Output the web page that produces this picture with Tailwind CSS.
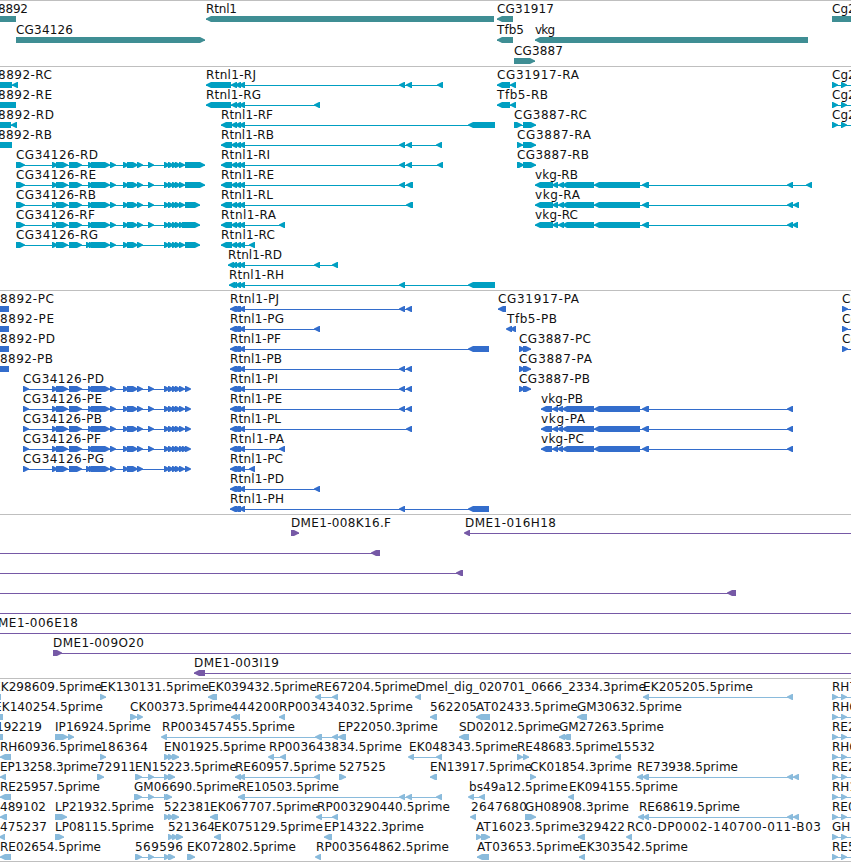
<!DOCTYPE html>
<html lang="en">
<head>
    <meta charset="UTF-8">
    <meta name="viewport" content="width=device-width, initial-scale=1.0">
    <title>Genome browser</title>
    <script src="https://cdn.jsdelivr.net/npm/@tailwindcss/browser@4"></script>
</head>
<body class="bg-white overflow-hidden font-['DejaVu_Sans',sans-serif] text-[12px] text-black">
    <main class="flex flex-col w-[851px] h-[862px] overflow-hidden border-t border-[#bfbfbf]">
        <section id="genes" class="flex flex-col h-[66px] border-b border-[#bfbfbf] text-[#3f8e94]"></section>
        <section id="transcripts" class="flex flex-col h-[224px] border-b border-[#bfbfbf] text-[#009fc2]"></section>
        <section id="proteins" class="flex flex-col h-[224px] border-b border-[#bfbfbf] text-[#336dcc]"></section>
        <section id="clones" class="flex flex-col h-[164px] border-b border-[#bfbfbf] text-[#7659a6]"></section>
        <section id="ests" class="flex flex-col h-[183px] border-b border-[#bfbfbf] text-[#8abbdc]"></section>
    </main>

    <script>
        // Shared exon runs
        const midExons = [52, 56, 56, 68, 69, 82, 88, 91, 91, 110, 110, 116, 123, 127, 127, 138, 137, 143, 148, 154, 164, 168, 168, 172, 172, 176, 175, 180, 179, 184];
        const midExonsG = [52, 56, 56, 68, 69, 82, 86, 89, 89, 92, 91, 110, 110, 116, 123, 127, 127, 138, 137, 143, 164, 168, 168, 172, 172, 176, 175, 180, 179, 184];
        const rtn = [231, 237, 235, 241, 239, 245];
        const rtnP = [230, 237, 233, 241, 239, 245];
        const vkg = [535, 553, 553, 558, 558, 564, 562, 594, 594, 640, 642, 649];
        const vkgP = [541, 552, 552, 558, 557, 563, 562, 594, 594, 640, 642, 649];
        const edge = [832, 838, 841, 847, 900, 905];
        const edgeP = [842, 848, 900, 905];

        // Feature: [label, label start (if the feature starts off screen), label end (0 = natural width), direction, exon start/end pairs]
        const genes = [
            [['8892', -2, 28, '=', [-10, 16]], ['Rtnl1', 206, 237, '<', [206, 494]], ['CG31917', 497, 554, '<', [497, 513]], ['Cg2', 832, 0, '=', [832, 900]]],
            [['CG34126', 16, 73, '>', [16, 205]], ['Tfb5', 497, 524, '<', [497, 513]], ['vkg', 535, 555, '<', [535, 808]]],
            [['CG3887', 514, 563, '>', [514, 535]]]
        ];

        const transcripts = [
            [['8892-RC', -2, 52, '=', [-10, 12]], ['', 0, 0, '<', [12, 18]], ['Rtnl1-RJ', 206, 256, '<', [206, 231, ...rtn, 399, 405, 406, 412, 437, 443]], ['CG31917-RA', 497, 579, '<', [497, 510, 510, 516]], ['Cg2', 832, 0, '>', edge]],
            [['8892-RE', -2, 52, '=', [-10, 16]], ['Rtnl1-RG', 206, 261, '<', [206, 231, ...rtn, 314, 320]], ['Tfb5-RB', 497, 548, '<', [497, 510, 510, 516]], ['Cg2', 832, 0, '>', edge]],
            [['8892-RD', -2, 54, '=', [-10, 11]], ['', 0, 0, '<', [11, 17]], ['Rtnl1-RF', 221, 273, '<', [221, 232, ...rtn, 468, 495]], ['CG3887-RC', 514, 587, '>', [514, 522, 523, 536]], ['Cg2', 832, 0, '>', edge]],
            [['8892-RB', -2, 52, '=', [-10, 12]], ['Rtnl1-RB', 221, 274, '<', [221, 232, ...rtn, 399, 405, 406, 412, 436, 442]], ['CG3887-RA', 517, 591, '>', [517, 522, 523, 536]]],
            [['CG34126-RD', 16, 98, '>', [16, 25, ...midExons, 185, 205]], ['Rtnl1-RI', 221, 270, '<', [221, 232, ...rtn, 399, 405, 406, 412, 437, 443]], ['CG3887-RB', 517, 589, '>', [517, 520, 518, 523, 523, 536]]],
            [['CG34126-RE', 16, 96, '>', [16, 25, ...midExons, 185, 205]], ['Rtnl1-RE', 221, 274, '<', [221, 232, ...rtn, 399, 405, 406, 413]], ['vkg-RB', 535, 578, '<', [...vkg, 787, 793, 806, 812]]],
            [['CG34126-RB', 16, 96, '>', [16, 25, ...midExons, 185, 200]], ['Rtnl1-RL', 221, 273, '<', [221, 232, ...rtn, 406, 413]], ['vkg-RA', 535, 580, '<', [...vkg, 787, 793, 793, 799]]],
            [['CG34126-RF', 16, 95, '>', [16, 25, ...midExons, 182, 200]], ['Rtnl1-RA', 221, 276, '<', [221, 232, ...rtn, 279, 285]], ['vkg-RC', 535, 578, '<', [...vkg, 787, 793, 792, 798]]],
            [['CG34126-RG', 16, 98, '>', [16, 25, ...midExonsG, 185, 200]], ['Rtnl1-RC', 221, 275, '<', [221, 232, ...rtn, 249, 255]]],
            [['Rtnl1-RD', 228, 282, '<', [228, 234, ...rtn, 314, 320, 332, 338]]],
            [['Rtnl1-RH', 229, 284, '<', [229, 235, ...rtn, 399, 405, 468, 495]]]
        ];

        const proteins = [
            [['8892-PC', 0, 54, '=', [-10, 9]], ['Rtnl1-PJ', 230, 279, '<', [...rtnP, 399, 405, 406, 412]], ['CG31917-PA', 498, 579, '<', [498, 506]], ['Cg2', 842, 0, '>', edgeP]],
            [['8892-PE', 0, 54, '=', [-10, 9]], ['Rtnl1-PG', 230, 284, '<', [...rtnP, 314, 320]], ['Tfb5-PB', 507, 557, '<', [507, 512, 510, 516]], ['Cg2', 842, 0, '>', edgeP]],
            [['8892-PD', 0, 55, '=', [-10, 9]], ['Rtnl1-PF', 230, 281, '<', [...rtnP, 468, 489]], ['CG3887-PC', 519, 591, '>', [519, 524, 523, 531]], ['Cg2', 842, 0, '>', edgeP]],
            [['8892-PB', 0, 53, '=', [-10, 9]], ['Rtnl1-PB', 230, 282, '<', [...rtnP, 399, 405, 406, 412]], ['CG3887-PA', 519, 592, '>', [519, 524, 523, 531]]],
            [['CG34126-PD', 23, 104, '>', [23, 29, ...midExons, 185, 190]], ['Rtnl1-PI', 230, 278, '<', [...rtnP, 399, 405, 406, 412]], ['CG3887-PB', 519, 590, '>', [519, 524, 523, 531]]],
            [['CG34126-PE', 23, 102, '>', [23, 29, ...midExons, 185, 190]], ['Rtnl1-PE', 230, 282, '<', [...rtnP, 399, 405, 406, 412]], ['vkg-PB', 541, 583, '<', [...vkgP, 787, 793]]],
            [['CG34126-PB', 23, 102, '>', [23, 29, ...midExons, 185, 190]], ['Rtnl1-PL', 230, 281, '<', [...rtnP, 406, 412]], ['vkg-PA', 541, 585, '<', [...vkgP, 787, 793]]],
            [['CG34126-PF', 23, 101, '>', [23, 29, ...midExons, 182, 187, 185, 190]], ['Rtnl1-PA', 230, 284, '<', [...rtnP, 279, 285]], ['vkg-PC', 541, 584, '<', [...vkgP, 787, 793]]],
            [['CG34126-PG', 23, 104, '>', [23, 29, ...midExonsG, 185, 190]], ['Rtnl1-PC', 230, 283, '<', [...rtnP, 249, 255]]],
            [['Rtnl1-PD', 230, 284, '<', [...rtnP, 314, 320]]],
            [['Rtnl1-PH', 230, 284, '<', [...rtnP, 399, 405, 468, 489]]]
        ];

        const clones = [
            [['DME1-008K16.F', 291, 391, '>', [291, 299]], ['DME1-016H18', 465, 556, '<', [465, 470, 900, 910]]],
            [['', 0, 0, '<', [-20, -10, 371, 380]]],
            [['', 0, 0, '<', [-20, -10, 456, 463]]],
            [['', 0, 0, '<', [-20, -10, 727, 736]]],
            [['', 0, 0, '<', [-20, -10, 900, 910]]],
            [['ME1-006E18', -2, 78, '<', [-20, -10, 900, 910]]],
            [['DME1-009O20', 53, 144, '>', [53, 62, 900, 910]]],
            [['DME1-003I19', 194, 279, '<', [194, 205, 900, 910]]]
        ];

        const ests = [
            [['EK298609.5prime', -7, 102, '=', [-5, 1]], ['EK130131.5prime', 100, 209, '>', [100, 106]], ['EK039432.5prime', 208, 317, '<', [208, 217]], ['RE67204.5prime', 316, 417, '<', [316, 321, 332, 338]], ['Dmel_dig_020701_0666_2334.3prime', 416, 646, '<', [416, 421]], ['EK205205.5prime', 643, 753, '<', [643, 649, 787, 793]], ['RH7', 832, 0, '>', edge]],
            [['EK140254.5prime', -6, 103, '=', [-5, 3]], ['CK00373.5prime', 130, 232, '>', [130, 137, 137, 142]], ['444200', 231, 279, '<', [231, 237, 235, 240]], ['RP003434032.5prime', 279, 413, '<', [279, 285]], ['562205', 430, 477, '<', [430, 437]], ['AT02433.5prime', 476, 578, '<', [476, 490]], ['GM30632.5prime', 577, 682, '<', [577, 587]], ['RH6', 832, 0, '>', edge]],
            [['192219', -4, 42, '=', [-5, 3]], ['IP16924.5prime', 55, 151, '>', [55, 68, 68, 74]], ['RP003457455.5prime', 162, 295, '<', [162, 167, 315, 322, 332, 338]], ['EP22050.3prime', 338, 438, '<', [338, 346]], ['SD02012.5prime', 459, 560, '<', [459, 469]], ['GM27263.5prime', 559, 664, '<', [559, 565, 562, 571]], ['RE2', 832, 0, '>', edge]],
            [['RH60936.5prime', 0, 102, '<', [0, 11]], ['186364', 100, 148, '>', [100, 106]], ['EN01925.5prime', 164, 266, '>', [164, 169, 168, 173, 172, 179]], ['RP003643834.5prime', 269, 402, '<', [269, 274, 280, 286]], ['EK048343.5prime', 409, 518, '<', [409, 414, 436, 442]], ['RE48683.5prime', 517, 618, '>', [517, 523, 523, 529]], ['15532', 616, 655, '<', [616, 621]], ['RH6', 832, 0, '>', edge]],
            [['EP13258.3prime', 0, 98, '<', [0, 6]], ['72911', 97, 136, '>', [97, 104]], ['EN15223.5prime', 135, 237, '>', [135, 142, 148, 154, 164, 169, 168, 175]], ['RE60957.5prime', 235, 336, '<', [235, 241, 239, 245, 314, 320]], ['527525', 339, 386, '>', [339, 346]], ['EN13917.5prime', 430, 532, '<', [430, 437]], ['CK01854.3prime', 530, 632, '>', [530, 536]], ['RE73938.5prime', 637, 738, '<', [637, 643, 642, 649, 787, 793, 793, 799]], ['RE2', 832, 0, '>', edge]],
            [['RE25957.5prime', 0, 100, '<', [0, 11]], ['GM06690.5prime', 134, 239, '>', [134, 142, 148, 154, 164, 168, 166, 172]], ['RE10503.5prime', 238, 339, '<', [238, 245, 399, 405, 406, 412, 436, 442]], ['bs49a12.5prime', 469, 568, '<', [469, 474, 479, 485]], ['EK094155.5prime', 569, 678, '<', [569, 574]], ['RH1', 832, 0, '>', edge]],
            [['489102', 0, 46, '<', [0, 7]], ['LP21932.5prime', 55, 154, '>', [55, 67]], ['522381', 164, 211, '>', [164, 169, 168, 173, 172, 179]], ['EK067707.5prime', 210, 319, '<', [210, 218]], ['RP003290440.5prime', 317, 450, '<', [317, 322, 332, 338]], ['2647680', 471, 527, '<', [471, 476]], ['GH08908.3prime', 525, 629, '>', [525, 536]], ['RE68619.5prime', 639, 740, '<', [639, 644, 643, 649, 787, 793, 793, 799]], ['RE0', 832, 0, '>', edge]],
            [['475237', 0, 47, '<', [0, 5]], ['LP08115.5prime', 55, 154, '>', [55, 64]], ['521364', 168, 215, '>', [168, 173, 172, 177, 176, 183]], ['EK075129.5prime', 214, 323, '<', [214, 221]], ['EP14322.3prime', 324, 424, '<', [324, 332]], ['AT16023.5prime', 476, 579, '>', [476, 482, 481, 490]], ['329422', 578, 625, '<', [578, 585]], ['RC0-DP0002-140700-011-B03', 627, 821, '<', [627, 632]], ['GH', 832, 0, '>', edge]],
            [['RE02654.5prime', 0, 101, '<', [0, 11]], ['569596', 135, 183, '>', [135, 142, 148, 154, 164, 169, 168, 175]], ['EK072802.5prime', 187, 296, '>', [187, 195]], ['RP003564862.5prime', 316, 449, '<', [316, 321]], ['AT03653.5prime', 477, 580, '<', [477, 489]], ['EK303542.5prime', 579, 688, '<', [579, 585]], ['RE5', 833, 0, '>', edge]]
        ];

        // Short exons still get a 6px arrow, so neighbours overlap
        function exon(dir, a, b) {
            if (dir === '=') return `<path d="M${a} 15H${b}V21H${a}Z"/>`;
            if (dir === '<') {
                a = Math.min(a, b - 6);
                return `<path d="M${a} 17.5L${a + 5} 15H${b}V21H${a + 5}L${a} 18.5Z"/>`;
            }
            b = Math.max(b, a + 6);
            return `<path d="M${a} 15H${a + 1}L${b - 5} 15L${b} 17.5V18.5L${b - 5} 21H${a}Z"/>`;
        }

        function feature([label, start, end, dir, exons]) {
            const first = exons[0];
            const last = exons[exons.length - 1];
            const x = first < 0 ? start : first;
            let svg = `<rect x="${first}" y="18" width="${last - first}" height="1"/>`;
            for (let i = 0; i < exons.length; i += 2) {
                svg += exon(dir, exons[i], exons[i + 1]);
            }
            if (label) {
                const fit = end ? `textLength="${end - x}"` : '';
                svg += `<text x="${x}" y="12" class="fill-[#111111]" ${fit}>${label}</text>`;
            }
            return svg;
        }

        function renderTrack(id, rows, rowClass) {
            document.getElementById(id).innerHTML = rows.map(row =>
                `<svg class="${rowClass}" fill="currentColor">${row.map(feature).join('')}</svg>`
            ).join('');
        }

        renderTrack('genes', genes, 'block w-full h-[21px] shrink-0 overflow-visible');
        renderTrack('transcripts', transcripts, 'block w-full h-5 shrink-0 overflow-visible');
        renderTrack('proteins', proteins, 'block w-full h-5 shrink-0 overflow-visible');
        renderTrack('clones', clones, 'block w-full h-5 shrink-0 overflow-visible');
        renderTrack('ests', ests, 'block w-full h-5 shrink-0 overflow-visible');
    </script>
</body>
</html>
